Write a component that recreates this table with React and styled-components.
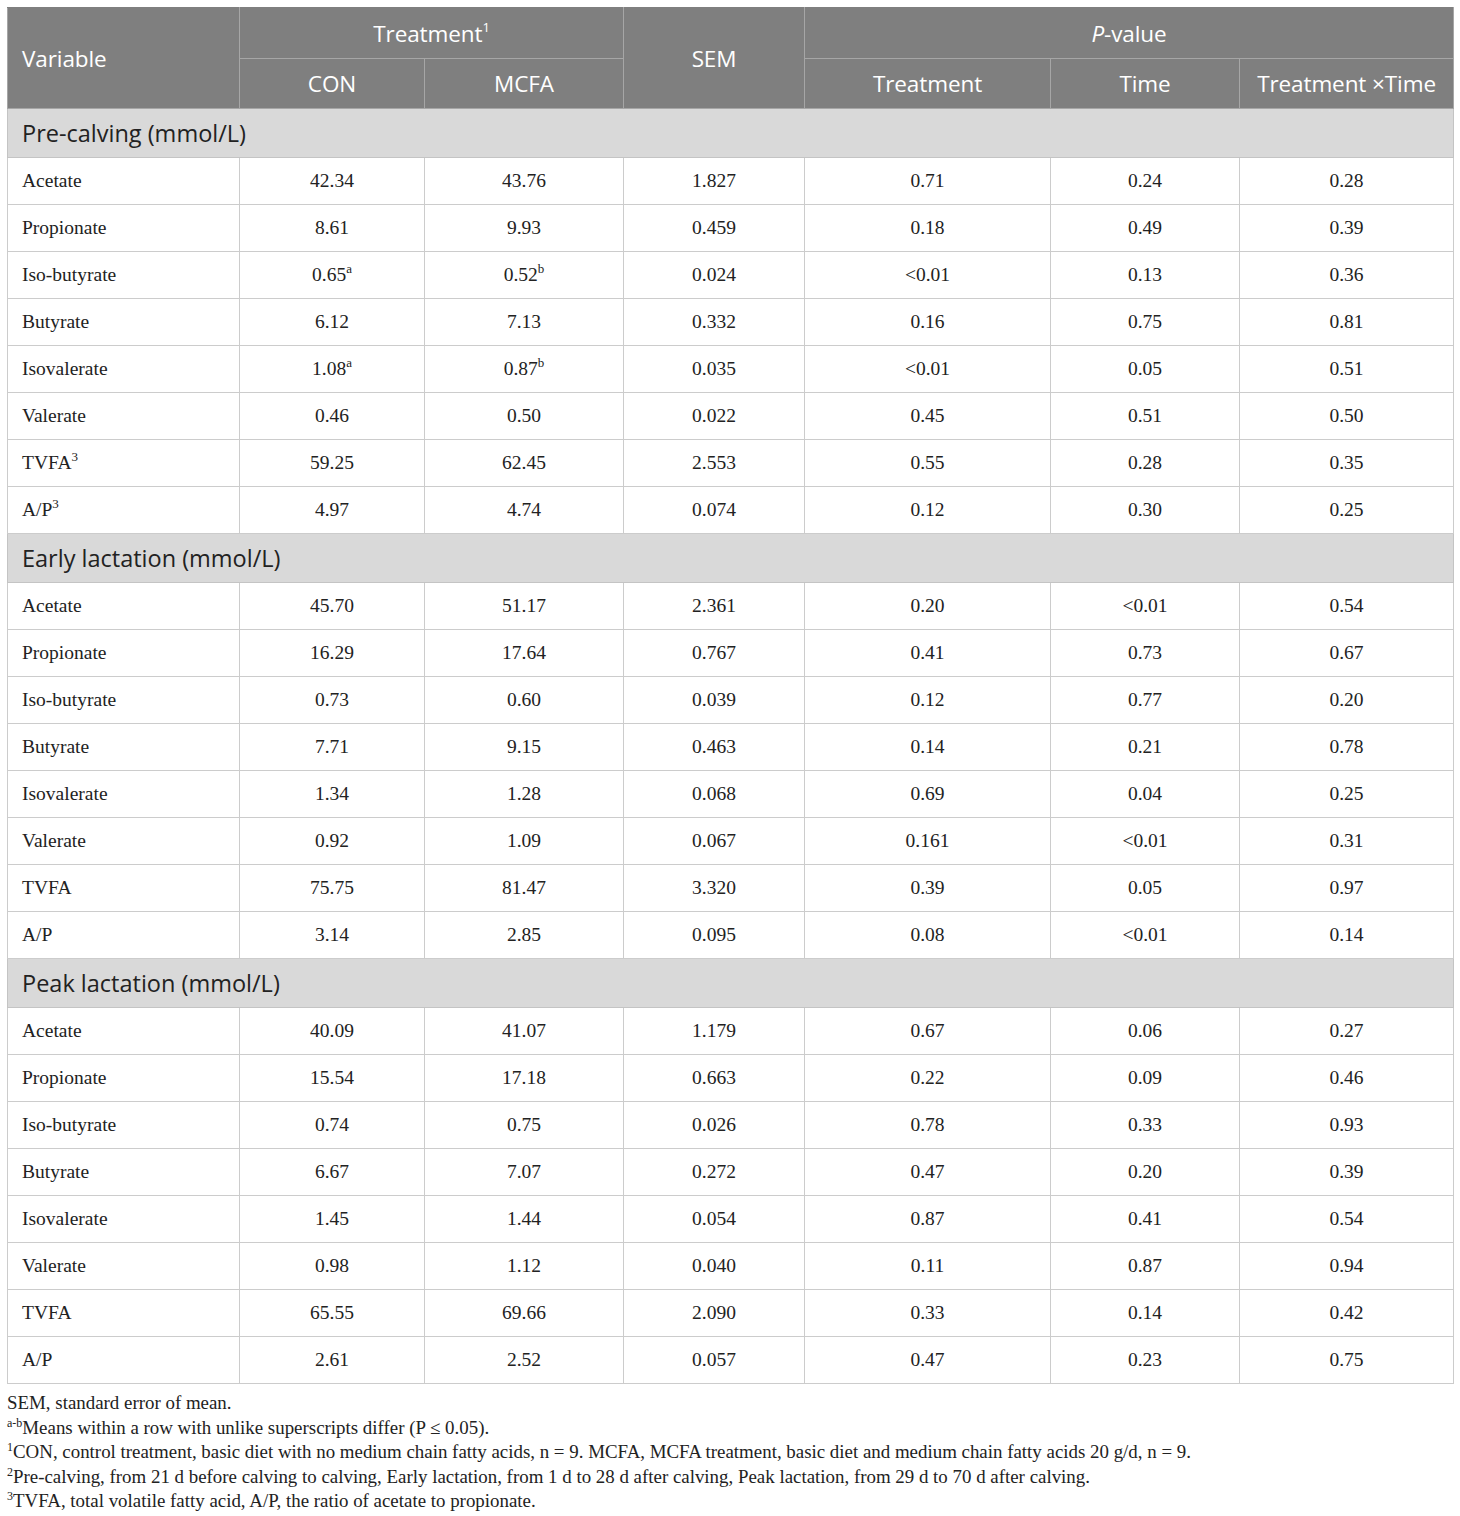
import React from "react";
import styled, { createGlobalStyle } from "styled-components";

const Global = createGlobalStyle`
  html, body { margin: 0; padding: 0; background: #ffffff; }
  body { font-family: "Liberation Serif", "Times New Roman", serif; color: #222; }
`;

const Page = styled.div`
  padding: 7px 7px 0 7px;
  width: 1446px;
`;

const Table = styled.table`
  width: 1446px;
  border-collapse: collapse;
  table-layout: fixed;
`;

const HeadCell = styled.th`
  background: #7f7f7f;
  color: #ffffff;
  font-family: "Open Sans", "Noto Sans", sans-serif;
  font-weight: 400;
  font-size: 22.5px;
  height: ${(p) => p.$h || 49}px;
  padding: 0 14px;
  text-align: ${(p) => (p.$left ? "left" : "center")};
  border: 1px solid #a6a6a6;
  border-top-color: #7f7f7f;
  letter-spacing: -0.1px;
  white-space: nowrap;
  sup { font-size: 13px; vertical-align: 10px; line-height: 0; }
  i { font-style: italic; }
`;

const SectionCell = styled.td`
  background: #d9d9d9;
  color: #222;
  font-family: "Open Sans", "Noto Sans", sans-serif;
  font-size: 23.5px;
  height: 48px;
  padding: 0 14px;
  border: 1px solid #c4c4c4;
  text-align: left;
  letter-spacing: 0;
`;

const Cell = styled.td`
  font-family: "Liberation Serif", "Times New Roman", serif;
  font-size: 19.5px;
  color: #222;
  height: 46px;
  padding: 0 14px;
  border: 1px solid #cccccc;
  text-align: ${(p) => (p.$left ? "left" : "center")};
  sup { font-size: 13px; vertical-align: 8px; line-height: 0; }
`;

const Notes = styled.div`
  margin-top: 7px;
  font-family: "Liberation Serif", "Times New Roman", serif;
  font-size: 18.9px;
  line-height: 24.5px;
  color: #222;
  white-space: nowrap;
  sup { font-size: 12px; vertical-align: 7px; line-height: 0; }
`;

const colWidths = [232, 185, 199, 181, 246, 189, 214];

const sections = [
  {
    title: "Pre-calving (mmol/L)",
    rows: [
      ["Acetate", "42.34", "43.76", "1.827", "0.71", "0.24", "0.28"],
      ["Propionate", "8.61", "9.93", "0.459", "0.18", "0.49", "0.39"],
      ["Iso-butyrate", ["0.65", "a"], ["0.52", "b"], "0.024", "<0.01", "0.13", "0.36"],
      ["Butyrate", "6.12", "7.13", "0.332", "0.16", "0.75", "0.81"],
      ["Isovalerate", ["1.08", "a"], ["0.87", "b"], "0.035", "<0.01", "0.05", "0.51"],
      ["Valerate", "0.46", "0.50", "0.022", "0.45", "0.51", "0.50"],
      [["TVFA", "3"], "59.25", "62.45", "2.553", "0.55", "0.28", "0.35"],
      [["A/P", "3"], "4.97", "4.74", "0.074", "0.12", "0.30", "0.25"],
    ],
  },
  {
    title: "Early lactation (mmol/L)",
    rows: [
      ["Acetate", "45.70", "51.17", "2.361", "0.20", "<0.01", "0.54"],
      ["Propionate", "16.29", "17.64", "0.767", "0.41", "0.73", "0.67"],
      ["Iso-butyrate", "0.73", "0.60", "0.039", "0.12", "0.77", "0.20"],
      ["Butyrate", "7.71", "9.15", "0.463", "0.14", "0.21", "0.78"],
      ["Isovalerate", "1.34", "1.28", "0.068", "0.69", "0.04", "0.25"],
      ["Valerate", "0.92", "1.09", "0.067", "0.161", "<0.01", "0.31"],
      ["TVFA", "75.75", "81.47", "3.320", "0.39", "0.05", "0.97"],
      ["A/P", "3.14", "2.85", "0.095", "0.08", "<0.01", "0.14"],
    ],
  },
  {
    title: "Peak lactation (mmol/L)",
    rows: [
      ["Acetate", "40.09", "41.07", "1.179", "0.67", "0.06", "0.27"],
      ["Propionate", "15.54", "17.18", "0.663", "0.22", "0.09", "0.46"],
      ["Iso-butyrate", "0.74", "0.75", "0.026", "0.78", "0.33", "0.93"],
      ["Butyrate", "6.67", "7.07", "0.272", "0.47", "0.20", "0.39"],
      ["Isovalerate", "1.45", "1.44", "0.054", "0.87", "0.41", "0.54"],
      ["Valerate", "0.98", "1.12", "0.040", "0.11", "0.87", "0.94"],
      ["TVFA", "65.55", "69.66", "2.090", "0.33", "0.14", "0.42"],
      ["A/P", "2.61", "2.52", "0.057", "0.47", "0.23", "0.75"],
    ],
  },
];

const renderValue = (v) =>
  Array.isArray(v) ? (
    <>
      {v[0]}
      <sup>{v[1]}</sup>
    </>
  ) : (
    v
  );

export default function App() {
  return (
    <>
      <Global />
      <Page>
        <Table>
          <colgroup>
            {colWidths.map((w, i) => (
              <col key={i} style={{ width: w }} />
            ))}
          </colgroup>
          <thead>
            <tr>
              <HeadCell rowSpan={2} $left>
                Variable
              </HeadCell>
              <HeadCell colSpan={2} $h={50}>
                Treatment<sup>1</sup>
              </HeadCell>
              <HeadCell rowSpan={2}>SEM</HeadCell>
              <HeadCell colSpan={3} $h={50}>
                <i>P</i>-value
              </HeadCell>
            </tr>
            <tr>
              <HeadCell>CON</HeadCell>
              <HeadCell>MCFA</HeadCell>
              <HeadCell>Treatment</HeadCell>
              <HeadCell>Time</HeadCell>
              <HeadCell>Treatment ×Time</HeadCell>
            </tr>
          </thead>
          {sections.map((s) => (
            <tbody key={s.title}>
              <tr>
                <SectionCell colSpan={7}>{s.title}</SectionCell>
              </tr>
              {s.rows.map((r, ri) => (
                <tr key={ri}>
                  {r.map((v, ci) => (
                    <Cell key={ci} $left={ci === 0}>
                      {renderValue(v)}
                    </Cell>
                  ))}
                </tr>
              ))}
            </tbody>
          ))}
        </Table>
        <Notes>
          <div>SEM, standard error of mean.</div>
          <div>
            <sup>a-b</sup>Means within a row with unlike superscripts differ (P ≤ 0.05).
          </div>
          <div>
            <sup>1</sup>CON, control treatment, basic diet with no medium chain fatty acids, n = 9. MCFA, MCFA
            treatment, basic diet and medium chain fatty acids 20 g/d, n = 9.
          </div>
          <div>
            <sup>2</sup>Pre-calving, from 21 d before calving to calving, Early lactation, from 1 d to 28 d after
            calving, Peak lactation, from 29 d to 70 d after calving.
          </div>
          <div>
            <sup>3</sup>TVFA, total volatile fatty acid, A/P, the ratio of acetate to propionate.
          </div>
        </Notes>
      </Page>
    </>
  );
}
